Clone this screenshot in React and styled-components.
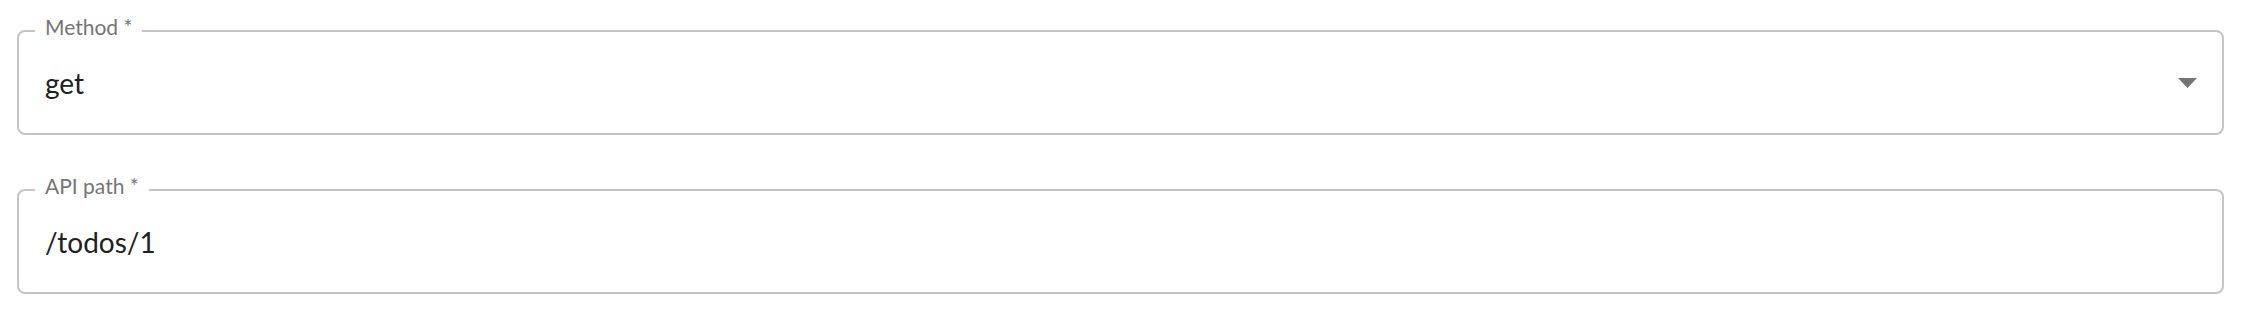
import React from 'react';
import styled, { createGlobalStyle } from 'styled-components';

const GlobalStyle = createGlobalStyle`
  html, body {
    margin: 0;
    padding: 0;
    background: #ffffff;
  }
  body {
    font-family: Lato, "Noto Sans", "Liberation Sans", sans-serif;
  }
`;

export default function App() {
  return (
    <>
      <GlobalStyle />
      <Form>
        <Field>
          <Label>Method *</Label>
          <Value>get</Value>
          <Arrow width="19" height="10" viewBox="0 0 19 10">
            <polygon points="0,0 19,0 9.5,10" fill="#757575" />
          </Arrow>
        </Field>
        <Field>
          <Label>API path *</Label>
          <Value>/todos/1</Value>
        </Field>
      </Form>
    </>
  );
}

const Form = styled.div`
  display: flex;
  flex-direction: column;
  gap: 54px;
  padding: 30px 34px 0 17px;
`;

const Field = styled.div`
  position: relative;
  display: flex;
  align-items: center;
  box-sizing: border-box;
  height: 105px;
  padding: 0 25px 0 26px;
  border: 2px solid #c4c4c4;
  border-radius: 8px;
`;

const Label = styled.span`
  position: absolute;
  top: -16px;
  left: 16px;
  padding: 0 10px;
  background: #ffffff;
  color: #757575;
  font-size: 21px;
  line-height: 22px;
`;

const Value = styled.div`
  flex: 1;
  color: #212121;
  font-size: 28px;
  line-height: 34px;
`;

const Arrow = styled.svg`
  flex: none;
  display: block;
`;
